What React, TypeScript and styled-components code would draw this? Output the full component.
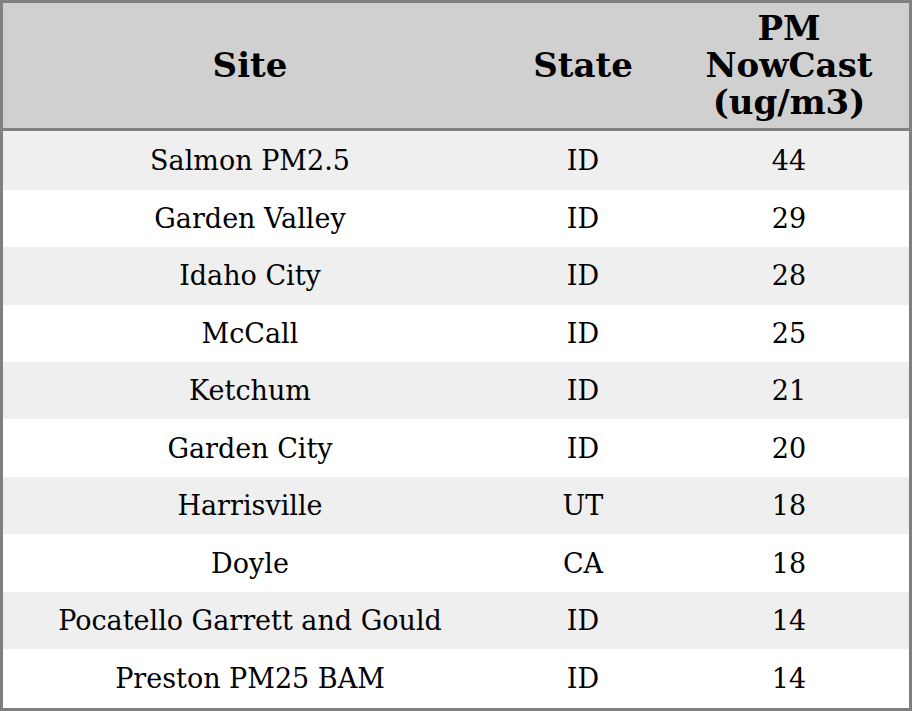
import styled, { createGlobalStyle } from 'styled-components'
import { ReactElement } from 'react'

type Row = { site: string; state: string; value: number }

const rows: Row[] = [
  { site: 'Salmon PM2.5', state: 'ID', value: 44 },
  { site: 'Garden Valley', state: 'ID', value: 29 },
  { site: 'Idaho City', state: 'ID', value: 28 },
  { site: 'McCall', state: 'ID', value: 25 },
  { site: 'Ketchum', state: 'ID', value: 21 },
  { site: 'Garden City', state: 'ID', value: 20 },
  { site: 'Harrisville', state: 'UT', value: 18 },
  { site: 'Doyle', state: 'CA', value: 18 },
  { site: 'Pocatello Garrett and Gould', state: 'ID', value: 14 },
  { site: 'Preston PM25 BAM', state: 'ID', value: 14 },
]

const GlobalStyle = createGlobalStyle`
  html, body {
    margin: 0;
    padding: 0;
    background: #ffffff;
  }
  body {
    font-family: 'DejaVu Serif', 'Liberation Serif', serif;
  }
`

const Table = styled.table`
  width: 912px;
  height: 711px;
  border-collapse: collapse;
  border: 3px solid #808080;
  table-layout: fixed;
  color: #000000;
`

const HeadRow = styled.tr`
  background: #d0d0d0;
  border-bottom: 3px solid #808080;
`

const HeadCell = styled.th<{ width: number }>`
  width: ${({ width }) => width}px;
  height: 111px;
  padding: 7px 0;
  font-size: 34px;
  font-weight: 700;
  line-height: 37px;
  text-align: center;
  vertical-align: middle;
`

const BodyRow = styled.tr<{ shaded: boolean }>`
  background: ${({ shaded }) => (shaded ? '#efefef' : '#ffffff')};
`

const Cell = styled.td`
  padding: 0;
  font-size: 27px;
  text-align: center;
  vertical-align: middle;
`

export default function App(): ReactElement {
  return (
    <>
      <GlobalStyle />
      <Table>
        <thead>
          <HeadRow>
            <HeadCell width={494}>Site</HeadCell>
            <HeadCell width={172}>State</HeadCell>
            <HeadCell width={240}>
              PM
              <br />
              NowCast
              <br />
              (ug/m3)
            </HeadCell>
          </HeadRow>
        </thead>
        <tbody>
          {rows.map((row, i) => (
            <BodyRow key={row.site} shaded={i % 2 === 0}>
              <Cell>{row.site}</Cell>
              <Cell>{row.state}</Cell>
              <Cell>{row.value}</Cell>
            </BodyRow>
          ))}
        </tbody>
      </Table>
    </>
  )
}
